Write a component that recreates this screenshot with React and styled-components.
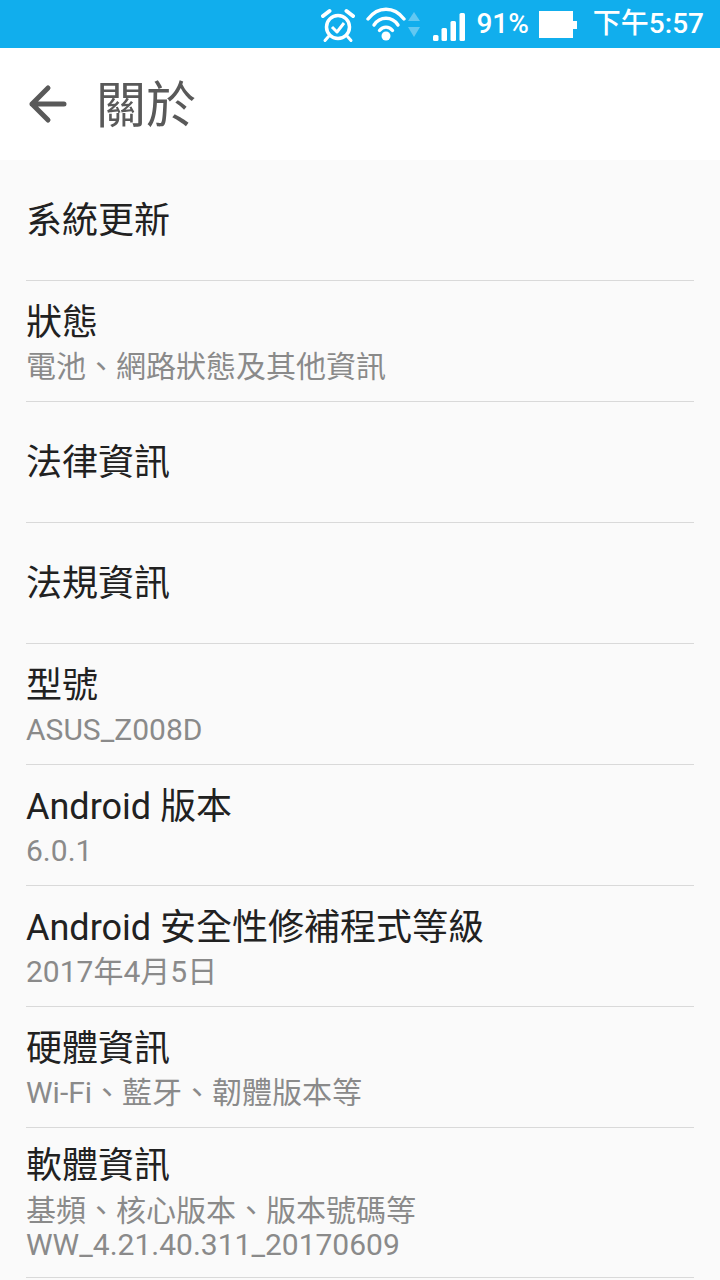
import React from "react";
import styled, { createGlobalStyle } from "styled-components";

const GlobalStyle = createGlobalStyle`
  html, body {
    margin: 0;
    padding: 0;
    background: #fafafa;
  }
  * {
    box-sizing: border-box;
  }
`;

const Page = styled.div`
  width: 720px;
  height: 1280px;
  overflow: hidden;
  display: flex;
  flex-direction: column;
  background: #fafafa;
  font-family: Roboto, "Noto Sans CJK TC", sans-serif;
`;

const StatusBar = styled.div`
  height: 48px;
  flex: none;
  background: #11aeed;
  color: #fff;
  display: flex;
  align-items: center;
  justify-content: flex-end;
  padding-right: 16px;
`;

const StatusText = styled.span`
  font-size: 28px;
  font-weight: 500;
  line-height: 48px;
  margin-left: ${(props) => props.$left || 0}px;
`;

const IconSlot = styled.svg`
  display: block;
  flex: none;
  margin-left: ${(props) => props.$left || 0}px;
`;

const Header = styled.header`
  height: 112px;
  flex: none;
  background: #fff;
  display: flex;
  align-items: center;
  padding-left: 26px;
`;

const Title = styled.h1`
  margin: 4px 0 0 28px;
  font-size: 50px;
  font-weight: 400;
  line-height: 1;
  color: #595959;
`;

const List = styled.ul`
  margin: 0;
  padding: 0 26px;
  list-style: none;
`;

const Row = styled.li`
  height: ${(props) => props.$height || 121}px;
  border-bottom: 1px solid #d9d9d9;
  display: flex;
  flex-direction: column;
  justify-content: center;
  padding-top: ${(props) => props.$top ?? 2}px;
`;

const RowTitle = styled.div`
  font-size: 36px;
  line-height: 46px;
  color: #212121;
  white-space: nowrap;
`;

const RowSummary = styled.div`
  font-size: 30px;
  line-height: 34px;
  color: #8a8a8a;
  white-space: nowrap;
  &:nth-child(2) {
    margin-top: ${(props) => props.$gap || 4}px;
  }
`;

const rows = [
  { title: "系統更新" },
  { title: "狀態", summary: ["電池、網路狀態及其他資訊"] },
  { title: "法律資訊" },
  { title: "法規資訊" },
  { title: "型號", summary: ["ASUS_Z008D"] },
  { title: "Android 版本", summary: ["6.0.1"] },
  { title: "Android 安全性修補程式等級", summary: ["2017年4月5日"] },
  { title: "硬體資訊", summary: ["Wi-Fi、藍牙、韌體版本等"] },
  {
    title: "軟體資訊",
    summary: ["基頻、核心版本、版本號碼等", "WW_4.21.40.311_20170609"],
    height: 150,
    top: 0,
    gap: 5,
  },
];

function AlarmIcon() {
  return (
    <IconSlot width="34" height="48" viewBox="0 0 34 48" fill="none" stroke="#fff">
      <circle cx="17" cy="27" r="11.5" strokeWidth="3.5" />
      <path d="M11 27l5 5 7-9" strokeWidth="3" strokeLinejoin="round" />
      <path d="M2 16l6.5-5M32 16l-6.5-5" strokeWidth="4" strokeLinecap="round" />
      <path d="M7.5 36.5 4 40.5M26.5 36.5 30 40.5" strokeWidth="3" strokeLinecap="round" />
    </IconSlot>
  );
}

function WifiIcon() {
  return (
    <IconSlot width="56" height="48" viewBox="0 0 56 48" fill="none" $left={11}>
      <g stroke="#fff" strokeWidth="3.4" strokeLinecap="round">
        <path d="M2 19C12 6 28 6 38 19" />
        <path d="M8 25C14 16 26 16 32 25" />
        <path d="M13.5 30.5C17 26 23 26 26.5 30.5" />
      </g>
      <circle cx="20" cy="36" r="4.5" fill="#fff" />
      <path d="M42 21l6-9 6 9z" fill="#62c8f2" />
      <path d="M42 27l6 10 6-10z" fill="#62c8f2" />
    </IconSlot>
  );
}

function SignalIcon() {
  return (
    <IconSlot width="34" height="48" viewBox="0 0 34 48" fill="#fff" $left={10}>
      <rect x="1" y="35" width="5.5" height="6" rx="1.5" />
      <rect x="9.5" y="28" width="5.5" height="13" rx="1.5" />
      <rect x="18.5" y="21" width="5.5" height="20" rx="1.5" />
      <rect x="27.5" y="13" width="5.5" height="28" rx="1.5" />
    </IconSlot>
  );
}

function BatteryIcon() {
  return (
    <IconSlot width="38" height="48" viewBox="0 0 38 48" fill="#fff" $left={10}>
      <path d="M0 11h34v10h4v8h-4v9H0z" />
    </IconSlot>
  );
}

function BackArrow() {
  return (
    <svg width="42" height="42" viewBox="0 0 42 42" fill="none" stroke="#595959" strokeWidth="5" strokeLinecap="round" strokeLinejoin="round">
      <path d="M38 21H6M22 5 6 21l16 16" />
    </svg>
  );
}

function App() {
  return (
    <Page>
      <GlobalStyle />
      <StatusBar>
        <AlarmIcon />
        <WifiIcon />
        <SignalIcon />
        <StatusText $left={10}>91%</StatusText>
        <BatteryIcon />
        <StatusText $left={16}>下午5:57</StatusText>
      </StatusBar>
      <Header>
        <BackArrow />
        <Title>關於</Title>
      </Header>
      <List>
        {rows.map((row) => (
          <Row key={row.title} $height={row.height} $top={row.top}>
            <RowTitle>{row.title}</RowTitle>
            {row.summary &&
              row.summary.map((line) => (
                <RowSummary key={line} $gap={row.gap}>
                  {line}
                </RowSummary>
              ))}
          </Row>
        ))}
      </List>
    </Page>
  );
}

export default App;
